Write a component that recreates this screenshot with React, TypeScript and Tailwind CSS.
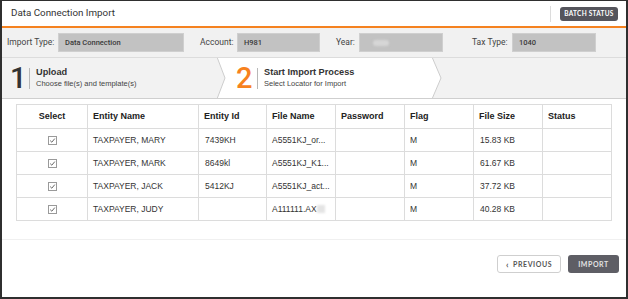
import React from "react";

const rows = [
  { name: "TAXPAYER, MARY", id: "7439KH", file: "A5551KJ_or...", flag: "M", size: "15.83 KB" },
  { name: "TAXPAYER, MARK", id: "8649kl", file: "A5551KJ_K1...", flag: "M", size: "61.67 KB" },
  { name: "TAXPAYER, JACK", id: "5412KJ", file: "A5551KJ_act...", flag: "M", size: "37.72 KB" },
  { name: "TAXPAYER, JUDY", id: "", file: "A111111.AX", flag: "M", size: "40.28 KB", blur: true },
];

const cols = [
  { label: "Select", w: "w-[71px]", center: true },
  { label: "Entity Name", w: "w-[111px]" },
  { label: "Entity Id", w: "w-[68px]" },
  { label: "File Name", w: "w-[69px]" },
  { label: "Password", w: "w-[69px]" },
  { label: "Flag", w: "w-[69px]" },
  { label: "File Size", w: "w-[69px]" },
  { label: "Status", w: "w-[69px]" },
];

function Check() {
  return (
    <svg width="9" height="9" viewBox="0 0 9 9" className="mx-auto block">
      <rect x="0.5" y="0.5" width="8" height="8" fill="#fff" stroke="#9a9a9a" />
      <polyline points="2.2,4.6 3.8,6.2 6.8,2.6" fill="none" stroke="#555" strokeWidth="0.9" />
    </svg>
  );
}

function Field({ label, lw, iw, ml, value, blur }: { label: string; lw: string; iw: string; ml: string; value?: string; blur?: boolean }) {
  return (
    <div className={`flex items-center ${ml}`}>
      <span className={`${lw} text-[8.5px] text-[#444]`}>{label}</span>
      <div className={`${iw} flex h-[19px] items-center border border-[#cfcfcf] bg-[#c2c2c2] pl-[6px] text-[7.5px] font-medium text-[#3a3a3a]`}>
        {value}
        {blur && <span className="ml-[7px] h-[6px] w-[16px] rounded-full bg-[#d6d6d6] blur-[1px]" />}
      </div>
    </div>
  );
}

export default function App() {
  return (
    <div className="flex h-[299px] w-[628px] flex-col overflow-hidden border-x-2 border-b-2 border-t border-[#2f2f2f] bg-white font-['Liberation_Sans',Arial,sans-serif]">
      {/* header */}
      <div className="flex h-[25px] shrink-0 items-center pl-[9px] pr-[8px]">
        <span className="font-['Roboto',sans-serif] text-[9.8px] text-[#333]">Data Connection Import</span>
        <span className="ml-auto h-[16px] w-px bg-[#dcdcdc]" />
        <span className="ml-[9px] flex h-[14px] w-[58px] items-center justify-center rounded-[3px] bg-[#55555c] font-['Lato',sans-serif] text-[6.5px] font-bold tracking-[0.04em] text-white">
          BATCH STATUS
        </span>
      </div>
      <div className="h-[2px] shrink-0 bg-[#f58220]" />

      {/* filters */}
      <div className="flex h-[30px] shrink-0 items-center border-b border-[#dcdcdc] bg-[#f1f1f1] pl-[5px] font-['Roboto',sans-serif]">
        <Field label="Import Type:" lw="w-[51px]" iw="w-[126px]" ml="" value="Data Connection" />
        <Field label="Account:" lw="w-[37px]" iw="w-[83px]" ml="ml-[16px]" value="H981" />
        <Field label="Year:" lw="w-[23px]" iw="w-[84px]" ml="ml-[16px]" blur />
        <Field label="Tax Type:" lw="w-[40px]" iw="w-[84px]" ml="ml-[29px]" value="1040" />
      </div>

      {/* steps */}
      <div className="relative flex h-[41px] shrink-0 border-b border-[#cfcfcf] bg-[#f2f2f2]">
        <svg className="absolute inset-0" width="624" height="40" viewBox="0 0 624 40">
          <polygon points="215,-1 430,-1 439,20 430,41 215,41 223,20" fill="#fff" stroke="#cdcdcd" strokeWidth="1" />
        </svg>
        <div className="relative flex w-[215px] items-center pl-[8px]">
          <span className="w-[12px] text-center font-['Roboto',sans-serif] text-[29px] font-medium leading-none text-[#333]">1</span>
          <span className="ml-[7px] h-[21px] w-px bg-[#b8b8b8]" />
          <div className="ml-[6px] leading-none">
            <div className="text-[9.2px] font-bold text-[#333]">Upload</div>
            <div className="mt-[3px] text-[7.5px] text-[#444]">Choose file(s) and template(s)</div>
          </div>
        </div>
        <div className="relative flex items-center pl-[19px]">
          <span className="w-[12px] text-center font-['Roboto',sans-serif] text-[29px] font-medium leading-none text-[#f7821e]">2</span>
          <span className="ml-[9px] h-[21px] w-px bg-[#b8b8b8]" />
          <div className="ml-[6px] leading-none">
            <div className="text-[9.2px] font-bold text-[#333]">Start Import Process</div>
            <div className="mt-[3px] text-[7.5px] text-[#444]">Select Locator for Import</div>
          </div>
        </div>
      </div>

      {/* table */}
      <div className="pl-[14px] pt-[5px]">
        <table className="w-[595px] table-fixed border-collapse text-[8.5px] text-[#333]">
          <thead>
            <tr className="h-[24px]">
              {cols.map((c) => (
                <th
                  key={c.label}
                  className={`${c.w} border border-[#dcdcdc] px-[5px] text-[9px] font-bold text-[#222] ${c.center ? "text-center" : "text-left"}`}
                >
                  {c.label}
                </th>
              ))}
            </tr>
          </thead>
          <tbody>
            {rows.map((r) => (
              <tr key={r.name} className="h-[23px]">
                <td className="border border-[#dcdcdc]">
                  <Check />
                </td>
                <td className="border border-[#dcdcdc] px-[5px]">{r.name}</td>
                <td className="border border-[#dcdcdc] px-[6px]">{r.id}</td>
                <td className="border border-[#dcdcdc] px-[5px]">
                  <span className="flex items-center whitespace-nowrap">
                    {r.file}
                    {r.blur && <span className="h-[8px] w-[8px] bg-[#e4e4e4] blur-[1px]" />}
                  </span>
                </td>
                <td className="border border-[#dcdcdc] px-[5px]"></td>
                <td className="border border-[#dcdcdc] px-[5px]">{r.flag}</td>
                <td className="border border-[#dcdcdc] px-[6px]">{r.size}</td>
                <td className="border border-[#dcdcdc] px-[5px]"></td>
              </tr>
            ))}
          </tbody>
        </table>
      </div>

      <div className="mt-[18px] h-px shrink-0 bg-[#f0f0f0]" />

      {/* footer */}
      <div className="flex justify-end gap-[7px] pr-[7px] pt-[15px] font-['Lato',sans-serif]">
        <button className="flex h-[18px] w-[64px] items-center justify-center gap-[4px] rounded-[3px] border border-[#cfcfcf] bg-white text-[7px] font-bold tracking-[0.08em] text-[#555]">
          <span className="text-[9px] font-bold leading-none">‹</span>
          PREVIOUS
        </button>
        <button className="flex h-[18px] w-[51px] items-center justify-center rounded-[3px] bg-[#5e5e65] text-[7px] font-bold tracking-[0.08em] text-[#e2e2e2]">
          IMPORT
        </button>
      </div>
    </div>
  );
}
